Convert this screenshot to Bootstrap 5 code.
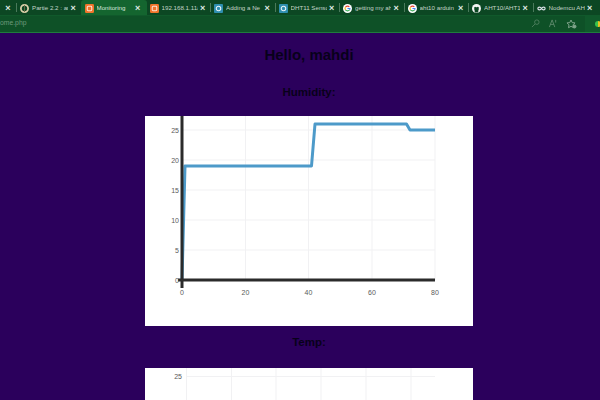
<!DOCTYPE html>
<html lang="en">
<head>
    <meta charset="UTF-8">
    <meta name="viewport" content="width=device-width, initial-scale=1.0">
    <title>Monitoring</title>
    <link href="https://cdn.jsdelivr.net/npm/bootstrap@5.3.1/dist/css/bootstrap.min.css" rel="stylesheet">
    <style>
        html, body { height: 400px; overflow: hidden; }
        body { background: #2b005c; font-family: "Liberation Sans", Arial, sans-serif; color: #08001a; }
        .browser-top { height: 33px; background: #10592b; border-bottom: 1px solid #1f7a3d; }
        .tab-strip { height: 15px; background: #0c4723; overflow: hidden; }
        .first-close { width: 16px; flex: none; text-align: center; }
        .tab-sep { width: 1px; height: 9px; flex: none; background: #4a7a5b; }
        .tab-item { width: 63.5px; flex: none; height: 15px; color: #c3d4c8; font-size: 6.2px; padding-left: 3px; padding-top: 1px; white-space: nowrap; }
        .tab-item.active-tab { width: 66px; padding-left: 4px; background: #14652f; border-radius: 3px 3px 0 0; color: #d8e6dc; }
        .tab-icon { width: 9px; height: 9px; flex: none; }
        .tab-name { width: 36px; flex: none; overflow: hidden; margin-left: 3px; }
        .tab-x { margin-left: 2.5px; font-size: 9px; font-weight: 700; color: #dfe9e2; line-height: 1; }
        .first-close.tab-x { margin-left: 0; padding-top: 1px; }
        .addr-row { height: 17px; }
        .addr-box { flex: 1; height: 16px; padding-right: 8px; background: #0e5127; color: #6f9a7c; font-size: 6.8px; }
        .addr-icons { margin-left: auto; }
        .addr-icons svg { display: block; }
        .ext-dot { width: 6px; height: 6px; border-radius: 50%; background: conic-gradient(#e8c120 0 50%, #37c24d 50% 100%); margin: 0 -1px 0 10px; flex: none; }
        .main-col { padding-left: 18px; }
        .hello-title { font-size: 15px; font-weight: 700; margin: 13px 0 0; line-height: 18px; }
        .sub-title { font-size: 11.5px; font-weight: 700; margin: 0; line-height: 14px; }
        .hum-title { margin-top: 21px; }
        .temp-title { margin-top: 9px; }
        .chart-box { width: 328px; background: #fff; flex: none; }
        .chart-one { height: 210px; margin-top: 17px; }
        .chart-two { height: 32px; margin-top: 19px; }
        .chart-box svg { display: block; }
        .grid-line { stroke: #f1f1f3; stroke-width: 1; fill: none; }
        .tick-label { font-family: "Liberation Sans", Arial, sans-serif; font-size: 7px; fill: #5a5a5a; }
    </style>
</head>
<body>
    <div class="browser-top">
        <div class="tab-strip d-flex align-items-center">
            <div class="first-close tab-x">×</div>
            <div class="tab-sep"></div>
            <div class="tab-item d-flex align-items-center">
                <svg class="tab-icon" viewBox="0 0 10 10"><circle cx="5" cy="5" r="4" fill="none" stroke="#d8cfa8" stroke-width="2"/><path d="M5 1v8" stroke="#6d6a4a"/></svg>
                <span class="tab-name">Partie 2.2 : ar</span><span class="tab-x">×</span>
            </div>
            <div class="tab-item active-tab d-flex align-items-center">
                <svg class="tab-icon" viewBox="0 0 10 10"><rect width="10" height="10" rx="1.500" fill="#f0742a"/><rect x="2.500" y="2.500" width="5" height="5" rx="1" fill="none" stroke="#fde3d2" stroke-width="1.200"/></svg>
                <span class="tab-name">Monitoring</span><span class="tab-x">×</span>
            </div>
            <div class="tab-item d-flex align-items-center">
                <svg class="tab-icon" viewBox="0 0 10 10"><rect width="10" height="10" rx="1.500" fill="#f0742a"/><rect x="2.500" y="2.500" width="5" height="5" rx="1" fill="none" stroke="#fde3d2" stroke-width="1.200"/></svg>
                <span class="tab-name">192.168.1.11/</span><span class="tab-x">×</span>
            </div>
            <div class="tab-sep"></div>
            <div class="tab-item d-flex align-items-center">
                <svg class="tab-icon" viewBox="0 0 10 10"><rect width="10" height="10" rx="1" fill="#2f8fb0"/><circle cx="5" cy="5" r="2.500" fill="none" stroke="#e6f3f7" stroke-width="1.200"/></svg>
                <span class="tab-name">Adding a Ne</span><span class="tab-x">×</span>
            </div>
            <div class="tab-sep"></div>
            <div class="tab-item d-flex align-items-center">
                <svg class="tab-icon" viewBox="0 0 10 10"><rect width="10" height="10" rx="1" fill="#2f8fb0"/><circle cx="5" cy="5" r="2.500" fill="none" stroke="#e6f3f7" stroke-width="1.200"/></svg>
                <span class="tab-name">DHT11 Senso</span><span class="tab-x">×</span>
            </div>
            <div class="tab-sep"></div>
            <div class="tab-item d-flex align-items-center">
                <svg class="tab-icon" viewBox="0 0 10 10"><circle cx="5" cy="5" r="5" fill="#fff"/><path d="M7 3.200A2.700 2.700 0 0 0 2.700 3.600" fill="none" stroke="#ea4335" stroke-width="1.300"/><path d="M2.700 3.600a2.700 2.700 0 0 0 0 2.800" fill="none" stroke="#fbbc05" stroke-width="1.300"/><path d="M2.700 6.400A2.700 2.700 0 0 0 7.300 6.400" fill="none" stroke="#34a853" stroke-width="1.300"/><path d="M7.300 6.400Q7.800 5.700 7.700 5H5" fill="none" stroke="#4285f4" stroke-width="1.300"/></svg>
                <span class="tab-name">getting my ah</span><span class="tab-x">×</span>
            </div>
            <div class="tab-sep"></div>
            <div class="tab-item d-flex align-items-center">
                <svg class="tab-icon" viewBox="0 0 10 10"><circle cx="5" cy="5" r="5" fill="#fff"/><path d="M7 3.200A2.700 2.700 0 0 0 2.700 3.600" fill="none" stroke="#ea4335" stroke-width="1.300"/><path d="M2.700 3.600a2.700 2.700 0 0 0 0 2.800" fill="none" stroke="#fbbc05" stroke-width="1.300"/><path d="M2.700 6.400A2.700 2.700 0 0 0 7.300 6.400" fill="none" stroke="#34a853" stroke-width="1.300"/><path d="M7.300 6.400Q7.800 5.700 7.700 5H5" fill="none" stroke="#4285f4" stroke-width="1.300"/></svg>
                <span class="tab-name">aht10 arduin</span><span class="tab-x">×</span>
            </div>
            <div class="tab-sep"></div>
            <div class="tab-item d-flex align-items-center">
                <svg class="tab-icon" viewBox="0 0 10 10"><circle cx="5" cy="5" r="5" fill="#f4f4f4"/><path d="M3 9.500V7.500L2.500 6V3.500L3.500 3l1 .5h1l1-.5 1 .5V6L7 7.500V9.500z" fill="#0c4723"/></svg>
                <span class="tab-name">AHT10/AHT1</span><span class="tab-x">×</span>
            </div>
            <div class="tab-sep"></div>
            <div class="tab-item d-flex align-items-center">
                <svg class="tab-icon" viewBox="0 0 10 10"><path d="M5 5C4 3 1 3 1 5s3 2 4 0 4-2 4 0-3 2-4 0z" fill="none" stroke="#d9e0e6" stroke-width="1.300"/></svg>
                <span class="tab-name">Nodemcu AH</span><span class="tab-x">×</span>
            </div>
        </div>
        <div class="addr-row d-flex align-items-center">
            <div class="addr-box d-flex align-items-center">
                <span>ome.php</span>
                <div class="addr-icons d-flex align-items-center gap-2">
                    <svg width="9" height="9" viewBox="0 0 10 10" fill="none" stroke="#4f8060"><circle cx="6.500" cy="3.500" r="2.500"/><path d="M4.500 5.500L1 9"/></svg>
                    <svg width="10" height="9" viewBox="0 0 10 10" fill="none" stroke="#5f8a6c"><path d="M1 9L4 1l3 8M2 6h4M8 1v3"/></svg>
                    <svg width="11" height="10" viewBox="0 0 11 10" fill="none" stroke="#7fa48b"><path d="M5 1l1.200 2.600 2.800.3-2 2 .5 2.800L5 7.300 2.500 8.700 3 5.900l-2-2 2.800-.3z"/><circle cx="8.500" cy="7.500" r="1.500" fill="#7fa48b"/></svg>
                </div>
            </div>
            <span class="ext-dot"></span>
        </div>
    </div>

    <div class="main-col text-center d-flex flex-column align-items-center">
        <h1 class="hello-title">Hello, mahdi</h1>
        <h2 class="sub-title hum-title">Humidity:</h2>
        <div class="chart-box chart-one">
            <svg width="328" height="210" viewBox="145 116 328 210">
                <g class="grid-line">
                    <path d="M245.500 116V280M308.500 116V280M372 116V280M435 116V280"/>
                    <path d="M182 130H435M182 160H435M182 190H435M182 220H435M182 250H435"/>
                </g>
                <path d="M182 280L185 166H311.500L315 124H406.500L410 130H435" fill="none" stroke="#4d9ac9" stroke-width="3" stroke-linejoin="round"/>
                <path d="M182 116V288" stroke="#2b2b2b" stroke-width="3"/>
                <path d="M178 280H435" stroke="#2b2b2b" stroke-width="3"/>
                <g class="tick-label" text-anchor="end">
                    <text x="179" y="132.500">25</text>
                    <text x="179" y="162.500">20</text>
                    <text x="179" y="192.500">15</text>
                    <text x="179" y="222.500">10</text>
                    <text x="179" y="252.500">5</text>
                    <text x="179" y="282.500">0</text>
                </g>
                <g class="tick-label" text-anchor="middle">
                    <text x="182" y="295">0</text>
                    <text x="245.500" y="295">20</text>
                    <text x="308.500" y="295">40</text>
                    <text x="372" y="295">60</text>
                    <text x="435" y="295">80</text>
                </g>
            </svg>
        </div>
        <h2 class="sub-title temp-title">Temp:</h2>
        <div class="chart-box chart-two">
            <svg width="328" height="32" viewBox="145 368 328 32">
                <g class="grid-line">
                    <path d="M186.500 368V400M231.500 368V400M276 368V400M321 368V400M366 368V400M411 368V400"/>
                    <path d="M186 376.500H435"/>
                </g>
                <text class="tick-label" x="182" y="379" text-anchor="end">25</text>
            </svg>
        </div>
    </div>
    <script src="https://cdn.jsdelivr.net/npm/bootstrap@5.3.1/dist/js/bootstrap.bundle.min.js"></script>
</body>
</html>
